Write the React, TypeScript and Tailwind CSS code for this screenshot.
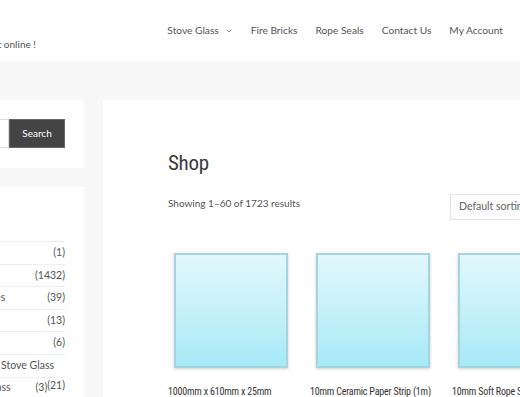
import { ChevronDown } from "lucide-react"

const nav = ["Fire Bricks", "Rope Seals", "Contact Us", "My Account"]

const cats = [
  { count: "(1)" },
  { count: "(1432)" },
  { name: "Fire Cement & Adhesives", count: "(39)" },
  { count: "(13)" },
  { count: "(6)" },
]

const products = [
  "1000mm x 610mm x 25mm",
  "10mm Ceramic Paper Strip (1m)",
  "10mm Soft Rope Seal (1m)",
]

const condensed =
  "font-['Roboto_Condensed','Liberation_Sans_Narrow','DejaVu_Sans_Condensed',Roboto,sans-serif] font-stretch-condensed"

export default function App() {
  return (
    <div className="w-[520px] h-[397px] overflow-hidden bg-[#f7f7f7] font-['Lato',sans-serif] text-[#555]">
      {/* header */}
      <header className="h-[61px] bg-white flex items-start">
        <div className="w-[36px] flex justify-end pt-[37px] text-[10px] whitespace-nowrap">
          <span className="shrink-0">Buy direct online !</span>
        </div>
        <nav className="ml-auto flex items-center gap-[18px] pt-[23px] pr-[17px] text-[10.2px] text-[#555]">
          <span className="flex items-center gap-[6px]">
            Stove Glass
            <ChevronDown className="w-[8px] h-[8px]" strokeWidth={2} />
          </span>
          {nav.map((n) => (
            <span key={n}>{n}</span>
          ))}
        </nav>
      </header>

      <div className="flex pt-[39px] gap-[19px]">
        {/* sidebar */}
        <aside className="w-[84px] shrink-0 flex flex-col gap-[19px]">
          <div className="bg-white h-[68px] pt-[19px] pr-[19px] flex justify-end items-start">
            <div className="w-[160px] shrink-0 h-[29px] border border-[#ddd] bg-white" />
            <button className="w-[56px] shrink-0 h-[29px] bg-[#444] border border-[#666] text-white text-[10px]">
              Search
            </button>
          </div>
          <div className="bg-white pt-[54px] pr-[19px] h-[220px] text-[10.5px] text-[#555]">
            {cats.map((c) => (
              <div key={c.count} className="h-[22.6px] border-t border-[#eee] flex items-center justify-end whitespace-nowrap">
                {c.name && <span className="shrink-0 mr-[42px]">{c.name}</span>}
                <span className="shrink-0">{c.count}</span>
              </div>
            ))}
            <div className="h-[22.6px] border-t border-[#eee] flex items-center justify-end whitespace-nowrap">
              <span className="shrink-0 mr-[11px]">Replacement Stove Glass</span>
            </div>
            <div className="h-[22.6px] border-t border-[#eee] flex items-center justify-end whitespace-nowrap">
              <span className="shrink-0">Round Glass</span>
              <span className="shrink-0 ml-[25px]">(3)</span>
              <span className="shrink-0 -translate-y-[2px]">(21)</span>
            </div>
          </div>
        </aside>

        {/* main */}
        <main className="flex-1 bg-white h-[300px] pl-[65px] pt-[50px] overflow-hidden">
          <h1 className={`${condensed} text-[21px] leading-[26px] tracking-[-0.3px] text-[#3a3a3a]`}>Shop</h1>
          <div className="mt-[18px] flex items-start w-[460px]">
            <p className="w-[282px] shrink-0 text-[10px] leading-[18px] text-[#555]">
              Showing 1–60 of 1723 results
            </p>
            <div className="w-[160px] shrink-0 h-[26px] border border-[#e3e3e3] bg-[#fcfcfc] pl-[8px] flex items-center text-[10.5px] text-[#666]">
              Default sorting
            </div>
          </div>
          <div className="mt-[33px] flex gap-[14px] w-[500px]">
            {products.map((p) => (
              <div key={p} className="w-[128px] shrink-0">
                <div className="mx-[6px] w-[114px] h-[115px] border-2 border-[#a9d3dc] bg-gradient-to-b from-[#e2f8fc] to-[#a6e9f7] shadow-[0_1px_3px_rgba(0,0,0,0.2)]" />
                <div className={`${condensed} mt-[17px] text-[10px] leading-[14px] tracking-[-0.2px] text-[#333] whitespace-nowrap`}>
                  {p}
                </div>
              </div>
            ))}
          </div>
        </main>
      </div>
    </div>
  )
}
